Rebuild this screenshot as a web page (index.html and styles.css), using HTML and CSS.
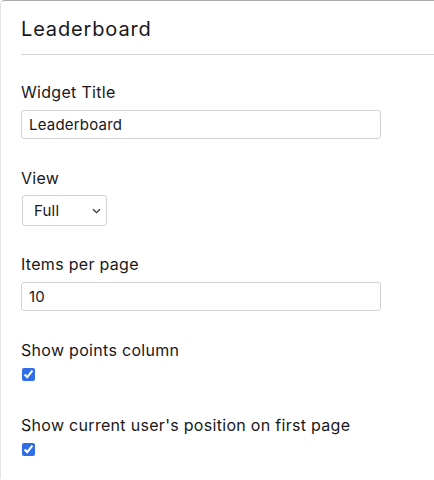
FILE: index.html
```html
<!DOCTYPE html>
<html>
<head>
<meta charset="utf-8">
<link rel="stylesheet" href="styles.css">
</head>
<body>
<div class="panel">
  <div class="header"><h1 class="title">Leaderboard</h1></div>
  <div class="body">
    <div class="field">
      <label class="label">Widget Title</label>
      <input class="text-input" type="text" value="Leaderboard">
    </div>
    <div class="field">
      <label class="label">View</label>
      <div class="select-wrap">
        <select class="select"><option>Full</option></select>
        <svg class="chev" width="9" height="6" viewBox="0 0 9 6"><path d="M1 1.2 L4.5 4.6 L8 1.2" fill="none" stroke="#333" stroke-width="1.2"/></svg>
      </div>
    </div>
    <div class="field">
      <label class="label">Items per page</label>
      <input class="text-input" type="text" value="10">
    </div>
    <div class="field">
      <label class="label">Show points column</label>
      <input class="check" type="checkbox" checked>
    </div>
    <div class="field">
      <label class="label">Show current user's position on first page</label>
      <input class="check" type="checkbox" checked>
    </div>
  </div>
</div>
</body>
</html>
```
FILE: styles.css
```css
html, body { margin: 0; padding: 0; background: #fff; }
body { font-family: Inter, "Noto Sans", sans-serif; color: #18181b; }
.panel {
  border-top: 1px solid #a9a9a9;
  border-left: 1px solid #e4e4e4;
  border-top-left-radius: 5px;
  height: 479px;
  box-sizing: border-box;
}
.header {
  margin-left: 20px;
  border-bottom: 1px solid #d4d4d4;
  height: 54px;
  box-sizing: border-box;
  padding-top: 3px;
  display: flex;
  align-items: center;
}
.title { margin: 0; font-size: 20px; font-weight: 400; letter-spacing: 0.85px; }
.body { padding: 27px 0 0 20px; display: flex; flex-direction: column; gap: 29px; }
.field { display: flex; flex-direction: column; align-items: flex-start; gap: 8px; }
.label { font-size: 16px; line-height: 20px; letter-spacing: 0.3px; }
.text-input {
  width: 360px; height: 29px; box-sizing: border-box;
  border: 1px solid #d2d2d2; border-radius: 3px;
  padding: 0 7px; font: inherit; font-size: 15px; letter-spacing: 0.2px; color: #18181b; margin: 0;
}
.select-wrap { position: relative; margin: -1px 0 -1px 1px; }
.select {
  appearance: none; -webkit-appearance: none;
  width: 85px; height: 31px; box-sizing: border-box;
  border: 1px solid #d2d2d2; border-radius: 3px; background: #fff;
  padding: 0 11px; font: inherit; font-size: 15px; letter-spacing: 0.2px; color: #18181b; margin: 0;
}
.chev { position: absolute; right: 6px; top: 13px; pointer-events: none; }
.check { margin: 0 0 5px 1px; width: 13px; height: 13px; accent-color: #2f6ee6; }
```
